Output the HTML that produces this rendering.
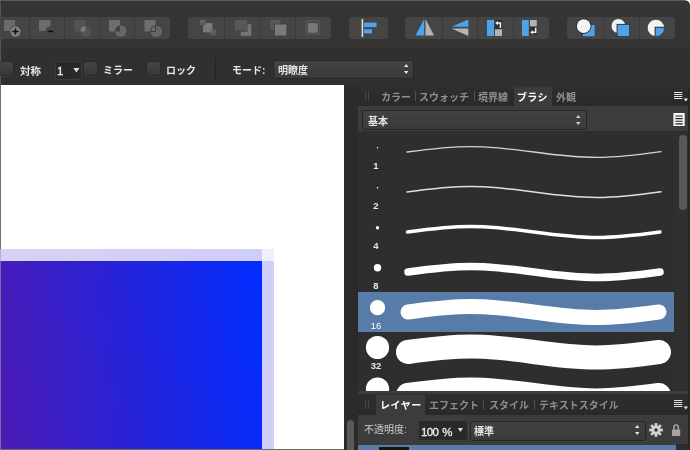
<!DOCTYPE html>
<html lang="ja">
<head>
<meta charset="utf-8">
<title>ブラシ</title>
<style>
*{box-sizing:border-box;margin:0;padding:0}
html,body{width:690px;height:450px;overflow:hidden;background:#323232}
body{position:relative;font-family:"Liberation Sans","Noto Sans CJK JP",sans-serif;color:#e6e6e6;font-size:10px;line-height:1}
#wrap{position:absolute;left:0;top:0;width:690px;height:450px;overflow:hidden;will-change:transform}
.abs,.abs>*{position:absolute}
.jp{font-family:"Liberation Sans","Noto Sans CJK JP",sans-serif;font-weight:700;font-size:10px;line-height:14px;white-space:nowrap;letter-spacing:0}
/* toolbar */
#tb{left:0;top:0;width:690px;height:85px;background:linear-gradient(#353535 0,#333 47px,#303030 50px,#303030 85px)}
#topline{left:0;top:0;width:690px;height:1px;background:#5c5c5c}
#leftline{left:0;top:1px;width:1px;height:84px;background:#565656}
.grp{top:17px;height:22px;background:#454545;border-radius:3px;overflow:hidden}
.grp i{position:absolute;top:0;width:1px;height:22px;background:#3a3a3a}
.cb{width:15px;height:15px;border-radius:3px;background:linear-gradient(#454545,#383838);border:1px solid #2b2b2b;box-shadow:0 1px 0 rgba(255,255,255,.04)}
.dd{background:linear-gradient(#424242,#3a3a3a);border:1px solid #262626;border-radius:2px}
.combo{background:#292929;border:1px solid #3c3c3c;border-radius:2px}
/* canvas */
#cv{left:1px;top:85px;width:343px;height:364px;background:#fff;overflow:hidden}
/* panels */
#gut{left:344px;top:85px;width:14px;height:365px;background:#2b2b2b}
#right{left:358px;top:87px;width:332px;height:363px;background:#3c3c3c}
.tabbar{background:linear-gradient(#2e2e2e,#292929);height:19px}
.tab{color:#8f8f8f}
.tab.on{color:#fff}
.tsep{width:1px;height:10px;background:#505050}
.row{left:358px;width:318px;height:40px}
.lbl{font-family:"Liberation Sans",sans-serif;font-weight:700;font-size:9.5px;color:#e8e8e8;width:40px;text-align:center;line-height:10px}
</style>
</head>
<body>
<div id="wrap">
<div class="abs" id="tb"></div>
<div class="abs" id="topline"></div>
<div class="abs" id="leftline"></div>

<!-- toolbar button groups -->
<div class="abs grp" style="left:-10px;width:180px"><i style="left:39px"></i><i style="left:74px"></i><i style="left:109px"></i><i style="left:144px"></i></div>
<div class="abs grp" style="left:188px;width:143px"><i style="left:36px"></i><i style="left:72px"></i><i style="left:107px"></i></div>
<div class="abs grp" style="left:349px;width:39px"></div>
<div class="abs grp" style="left:405px;width:144px"><i style="left:37px"></i><i style="left:72px"></i><i style="left:108px"></i></div>
<div class="abs grp" style="left:567px;width:108px"><i style="left:36px"></i><i style="left:72px"></i></div>

<svg class="abs" id="icons" style="left:0;top:0" width="690" height="50" viewBox="0 0 690 50">
  <!-- group 1 (dim boolean ops) -->
  <g>
    <rect x="4" y="20" width="11" height="11" fill="#6c6c6c"/><circle cx="15.5" cy="31.5" r="5.9" fill="#3e3e3e"/><circle cx="15.5" cy="31.5" r="5.2" fill="#808080"/><path d="M12.4 31.5h6.2M15.5 28.4v6.2" stroke="#0c0c0c" stroke-width="1.3"/>
    <rect x="39" y="20" width="11.4" height="11" fill="#6c6c6c"/><circle cx="51" cy="31.5" r="5.6" fill="#454545"/><path d="M48.2 31.4h5" stroke="#0c0c0c" stroke-width="1.4"/>
    <rect x="74.5" y="20" width="11" height="11.5" fill="#535353"/><circle cx="86" cy="31.3" r="5.6" fill="#535353"/><path d="M85.5 31.5H80.40A5.6 5.6 0 0 1 85.5 25.72Z" fill="#7a7a7a"/>
    <rect x="109" y="20" width="11" height="11.5" fill="#6e6e6e"/><circle cx="120.8" cy="31.2" r="5.8" fill="#666"/><path d="M120 31.5H115.01A5.8 5.8 0 0 1 120 25.46Z" fill="#434343"/>
    <circle cx="156.3" cy="31.5" r="5.8" fill="#666"/><rect x="144.5" y="20" width="11" height="11.5" fill="#6e6e6e"/><path d="M150.50 31.5A5.8 5.8 0 0 1 155.5 25.76" fill="none" stroke="#3a3a3a" stroke-width="1.1"/><path d="M150.50 31.5H155.5V25.76" fill="none" stroke="#3a3a3a" stroke-width="1"/>
  </g>
  <!-- group 2 (dim arrange) -->
  <g>
    <rect x="200" y="20" width="5.6" height="5" fill="#626262"/><rect x="203" y="23" width="9.5" height="9.3" fill="#7a7a7a"/><rect x="203" y="23" width="2.6" height="2" fill="#505050"/><rect x="210" y="29.4" width="6" height="5.8" fill="#5c5c5c"/><rect x="210" y="29.4" width="2.5" height="2.9" fill="#6a6a6a"/>
    <rect x="235" y="20" width="12" height="10.5" fill="#585858"/><path d="M247.5 24.3h3.8v11.5h-10.5v-4h6.7z" fill="#747474"/>
    <rect x="270.5" y="20" width="10" height="10" fill="#585858"/><rect x="274" y="23.6" width="13.2" height="12.8" fill="#3c3c3c"/><rect x="274.8" y="24.4" width="11.6" height="11.2" fill="#7a7a7a"/>
    <rect x="305.3" y="20.3" width="15" height="14.6" rx="1.2" fill="#565656"/><rect x="306.9" y="22.3" width="11.8" height="11.3" rx="1" fill="#3c3c3c"/><rect x="307.7" y="23.1" width="10.2" height="9.7" fill="#787878"/>
  </g>
  <!-- align -->
  <rect x="361.6" y="19" width="1.6" height="18" fill="#e0e0e0"/>
  <rect x="364" y="22.6" width="12.5" height="4.5" fill="#4fa2ec"/>
  <rect x="364" y="29.2" width="8" height="4.2" fill="#4fa2ec"/>
  <!-- flips -->
  <path d="M415.5 35.5h8.7V19z" fill="#4fa2ec"/><path d="M425.5 19v16.5h8.6z" fill="#b4b4b4"/>
  <path d="M451.5 26.8H468.3V19.6z" fill="#4fa2ec"/><path d="M451.5 28.4H468.3V36z" fill="#b4b4b4"/>
  <!-- rotates -->
  <rect x="487" y="20" width="7" height="16" fill="#4fa2ec"/><rect x="495" y="29.3" width="7" height="6.7" fill="#b4b4b4"/>
  <rect x="494.6" y="20" width="7.6" height="9" fill="#303030"/><path d="M497.3 23.1h3.1v5" fill="none" stroke="#f4f4f4" stroke-width="1.5"/><path d="M495.2 23.1l2.7-2.1v4.2z" fill="#f4f4f4"/>
  <rect x="522" y="20" width="6.8" height="16" fill="#4fa2ec"/><rect x="530" y="20" width="6.8" height="6.7" fill="#b4b4b4"/>
  <rect x="529.6" y="26.6" width="7.6" height="8" fill="#303030"/><path d="M535.7 27.8v4.5h-3.3" fill="none" stroke="#f4f4f4" stroke-width="1.5"/><path d="M530.2 32.3l2.7-2.1v4.2z" fill="#f4f4f4"/>
  <!-- boolean-ish coloured -->
  <rect x="583" y="25" width="11.6" height="11.2" fill="#4fa2ec"/><circle cx="583.7" cy="26.1" r="7.8" fill="#2c2c2c"/><circle cx="583.7" cy="26.1" r="6.9" fill="#f3f3f3"/>
  <circle cx="618.4" cy="26" r="6.9" fill="#f3f3f3"/><rect x="616.6" y="23.9" width="13" height="12.8" fill="#2c2c2c"/><rect x="617.5" y="24.8" width="11.6" height="11.3" fill="#4fa2ec"/>
  <circle cx="655.9" cy="27.9" r="8.2" fill="#f3f3f3"/>
  <path d="M654.6 26.8H664.1 A8.2 8.2 0 0 1 654.6 36Z" fill="#2c2c2c"/>
  <path d="M655.6 27.8H664.1 A8.2 8.2 0 0 1 655.6 36.1Z" fill="#4fa2ec"/>
</svg>

<!-- option bar -->
<div class="abs cb" style="left:-1px;top:61px"></div>
<div class="abs jp" style="left:20px;top:64px;font-size:10.5px">対称</div>
<div class="abs combo" style="left:55px;top:61px;width:27px;height:19px"></div>
<div class="abs" style="left:57px;top:65px;font-size:11.5px;line-height:12px;color:#f0f0f0;-webkit-text-stroke:.3px #f0f0f0">1</div>
<svg class="abs" style="left:73px;top:68px" width="7" height="5"><path d="M0.3 0h6.2L3.4 4.6z" fill="#ddd"/></svg>
<div class="abs cb" style="left:83px;top:61px"></div>
<div class="abs jp" style="left:103px;top:64px">ミラー</div>
<div class="abs cb" style="left:146px;top:61px"></div>
<div class="abs jp" style="left:166px;top:64px">ロック</div>
<div class="abs" style="left:215px;top:57px;width:1px;height:23px;background:#232323"></div>
<div class="abs jp" style="left:232px;top:64px">モード:</div>
<div class="abs dd" style="left:273px;top:60px;width:141px;height:19px"></div>
<div class="abs jp" style="left:278px;top:64px">明瞭度</div>
<svg class="abs" style="left:403px;top:63px" width="7" height="13"><path d="M3.2 1L5.4 3.9H1z M1 8h4.4L3.2 10.9z" fill="#e8e8e8"/></svg>

<!-- canvas -->
<div class="abs" id="cv">
  <div style="left:-1px;top:164px;width:262px;height:12px;background:linear-gradient(90deg,#d7d1f5,#cfcefa)"></div>
  <div style="left:261px;top:164px;width:12px;height:12px;background:#efeffd"></div>
  <div style="left:261px;top:176px;width:12px;height:200px;background:#cfcefa"></div>
  <div style="left:-1px;top:176px;width:262px;height:189px;background:linear-gradient(83deg,#4c1bb4,#002cff)"></div>
</div>
<div class="abs" style="left:0;top:85px;width:1px;height:365px;background:linear-gradient(#707070 0,#707070 164px,#b0aec8 164px,#b0aec8 176px,#7968a6 176px)"></div>
<div class="abs" style="left:0;top:449px;width:345px;height:1px;background:#6a6a6a"></div>

<div class="abs" id="gut"></div>
<div class="abs" style="left:347px;top:420px;width:7px;height:40px;border-radius:4px;background:#5a5a5a"></div>
<div class="abs" id="right"></div>

<!-- brush panel tabs -->
<div class="abs tabbar" style="left:358px;top:87px;width:332px"></div>
<div class="abs" style="left:365px;top:91px;width:1px;height:10px;background:#454545"></div>
<div class="abs" style="left:368px;top:91px;width:1px;height:10px;background:#454545"></div>
<div class="abs jp tab" style="left:381px;top:91px">カラー</div>
<div class="abs tsep" style="left:415px;top:91px"></div>
<div class="abs jp tab" style="left:419px;top:91px">スウォッチ</div>
<div class="abs tsep" style="left:474px;top:91px"></div>
<div class="abs jp tab" style="left:478px;top:91px">境界線</div>
<div class="abs" style="left:514px;top:87px;width:38px;height:19px;background:#3c3c3c"></div>
<div class="abs jp tab on" style="left:517px;top:91px;letter-spacing:.3px">ブラシ</div>
<div class="abs jp tab" style="left:556px;top:91px">外観</div>
<svg class="abs" style="left:673px;top:91px" width="16" height="12"><path d="M1 1.5h8.3M1 3.5h8.3M1 5.5h8.3M1 7.5h8.3" stroke="#e2e2e2" stroke-width="1"/><path d="M10.6 7.4h4.4l-2.2 3z" fill="#e6e6e6"/></svg>

<!-- category dropdown -->
<div class="abs dd" style="left:362px;top:110px;width:225px;height:20px"></div>
<div class="abs jp" style="left:368px;top:115px">基本</div>
<svg class="abs" style="left:575px;top:114px" width="7" height="13"><path d="M3.2 1L5.4 3.9H1z M1 8h4.4L3.2 10.9z" fill="#d0d0d0"/></svg>
<svg class="abs" style="left:673px;top:113px" width="12" height="13"><rect x=".4" y="0" width="11.3" height="13" fill="#f6f6f6"/><path d="M2.4 3h7.3M2.4 5.6h7.3M2.4 8.2h7.3M2.4 10.8h7.3" stroke="#1c1c1c" stroke-width="1.15"/></svg>

<!-- brush list -->
<div class="abs" style="left:358px;top:131px;width:332px;height:1px;background:#2e2e2e"></div>
<div class="abs" style="left:358px;top:132px;width:332px;height:259px;background:#2e2e2e;overflow:hidden" id="list">
  <div style="left:0;top:160px;width:318px;height:40px;background:#587ca8"></div>
  <svg style="left:0;top:0" width="332" height="259" viewBox="358 132 332 259">
    <g fill="none" stroke="#fff" stroke-linecap="round">
      <path d="M407 152C460 144.7 481 144.7 534 152S608 159.3 661 151.7" stroke-width="1.3" stroke="#d4d4d4"/>
      <path d="M407 192C460 184.7 481 184.7 534 192S608 199.3 661 191.7" stroke-width="1.6" stroke="#e0e0e0"/>
      <path d="M407.5 232C461 224.7 480.5 224.7 534 232S607 239.3 660 232" stroke-width="3.4"/>
      <path d="M408 272C461 264.7 480.5 264.7 534 272S607 279.3 660 272" stroke-width="7.5"/>
      <path d="M408 312C461 304.7 480.5 304.7 533.5 312S606 319.3 659 312" stroke-width="15"/>
      <path d="M408 352C461 344.7 480.5 344.7 533.5 352S606 359.3 659 352" stroke-width="24"/>
      <path d="M408 395C461 387.7 480.5 387.7 533.5 395S606 402.3 659 395" stroke-width="24"/>
    </g>
    <g fill="#fff">
      <circle cx="377.5" cy="147.7" r=".7"/>
      <circle cx="377.5" cy="187.7" r=".8"/>
      <circle cx="377.5" cy="227.7" r="1.7"/>
      <circle cx="377.5" cy="267.7" r="3.7"/>
      <circle cx="377.5" cy="307.7" r="7.6"/>
      <circle cx="377.5" cy="347.5" r="11.6"/>
      <circle cx="377.5" cy="389" r="11.6"/>
    </g>
  </svg>
  <div class="lbl" style="left:-2px;top:29px">1</div>
  <div class="lbl" style="left:-2px;top:69px">2</div>
  <div class="lbl" style="left:-2px;top:109px">4</div>
  <div class="lbl" style="left:-2px;top:149px">8</div>
  <div class="lbl" style="left:-2px;top:189px;font-weight:400;color:#fff">16</div>
  <div class="lbl" style="left:-2px;top:229px">32</div>
  <div style="left:316px;top:0;width:16px;height:259px;background:#303030"></div>
  <div style="left:321px;top:3px;width:8px;height:75px;border-radius:4px;background:#585858"></div>
</div>

<!-- layers panel -->
<div class="abs tabbar" style="left:358px;top:394px;width:332px;height:21px"></div>
<div class="abs" style="left:365px;top:400px;width:1px;height:9px;background:#454545"></div>
<div class="abs" style="left:368px;top:400px;width:1px;height:9px;background:#454545"></div>
<div class="abs" style="left:376px;top:395px;width:49px;height:20px;background:#3c3c3c"></div>
<div class="abs jp tab on" style="left:380px;top:399px;letter-spacing:.5px">レイヤー</div>
<div class="abs jp tab" style="left:429px;top:399px">エフェクト</div>
<div class="abs tsep" style="left:483px;top:400px"></div>
<div class="abs jp tab" style="left:489px;top:399px">スタイル</div>
<div class="abs tsep" style="left:534px;top:400px"></div>
<div class="abs jp tab" style="left:539px;top:399px">テキストスタイル</div>
<svg class="abs" style="left:673px;top:399px" width="16" height="12"><path d="M1 1.5h8.3M1 3.5h8.3M1 5.5h8.3M1 7.5h8.3" stroke="#e2e2e2" stroke-width="1"/><path d="M10.6 7.4h4.4l-2.2 3z" fill="#e6e6e6"/></svg>

<div class="abs jp" style="left:364px;top:423px;font-weight:500;color:#b8b8b8;font-size:10px">不透明度:</div>
<div class="abs combo" style="left:418px;top:420px;width:50px;height:21px"></div>
<div class="abs" style="left:421px;top:426px;font-size:11.5px;line-height:12px;color:#f0f0f0;letter-spacing:-.6px;word-spacing:1.2px;-webkit-text-stroke:.3px #f0f0f0">100 %</div>
<svg class="abs" style="left:457px;top:428px" width="7" height="5"><path d="M0.8 0h5.2L3.4 4z" fill="#ddd"/></svg>
<div class="abs dd" style="left:470px;top:421px;width:176px;height:20px"></div>
<div class="abs jp" style="left:474px;top:425px">標準</div>
<svg class="abs" style="left:634px;top:424px" width="7" height="13"><path d="M3.2 1L5.4 3.9H1z M1 8h4.4L3.2 10.9z" fill="#e8e8e8"/></svg>
<!-- gear -->
<svg class="abs" style="left:648px;top:422px" width="16" height="16" viewBox="-8 -8 16 16">
  <g fill="#d4d4d4"><circle r="4.6"/>
  <rect x="-1.35" y="-6.9" width="2.7" height="13.8"/>
  <rect x="-1.35" y="-6.9" width="2.7" height="13.8" transform="rotate(45)"/>
  <rect x="-1.35" y="-6.9" width="2.7" height="13.8" transform="rotate(90)"/>
  <rect x="-1.35" y="-6.9" width="2.7" height="13.8" transform="rotate(135)"/>
  </g><circle r="1.8" fill="#333"/>
</svg>
<!-- lock -->
<svg class="abs" style="left:671px;top:423px" width="11" height="14"><path d="M2.9 7V4.3a2.2 2.2 0 0 1 4.4 0V7" fill="none" stroke="#a6a6a6" stroke-width="1.5"/><rect x="1" y="6.4" width="8.2" height="6.7" rx=".6" fill="#a6a6a6"/></svg>

<div class="abs" style="left:358px;top:445px;width:318px;height:5px;background:#587ca8"></div>
<div class="abs" style="left:379px;top:447px;width:30px;height:3px;background:#161616"></div>
<div class="abs" style="left:676px;top:444px;width:14px;height:6px;background:#2c2c2c"></div>

<!-- window corner -->
<svg class="abs" style="left:684px;top:0" width="6" height="6"><path d="M.6 0H6V5.4A5.4 5.4 0 0 0 .6 0Z" fill="#fff"/></svg>
<div class="abs" style="left:688px;top:86px;width:2px;height:364px;background:#282828"></div>
</div>
</body>
</html>
